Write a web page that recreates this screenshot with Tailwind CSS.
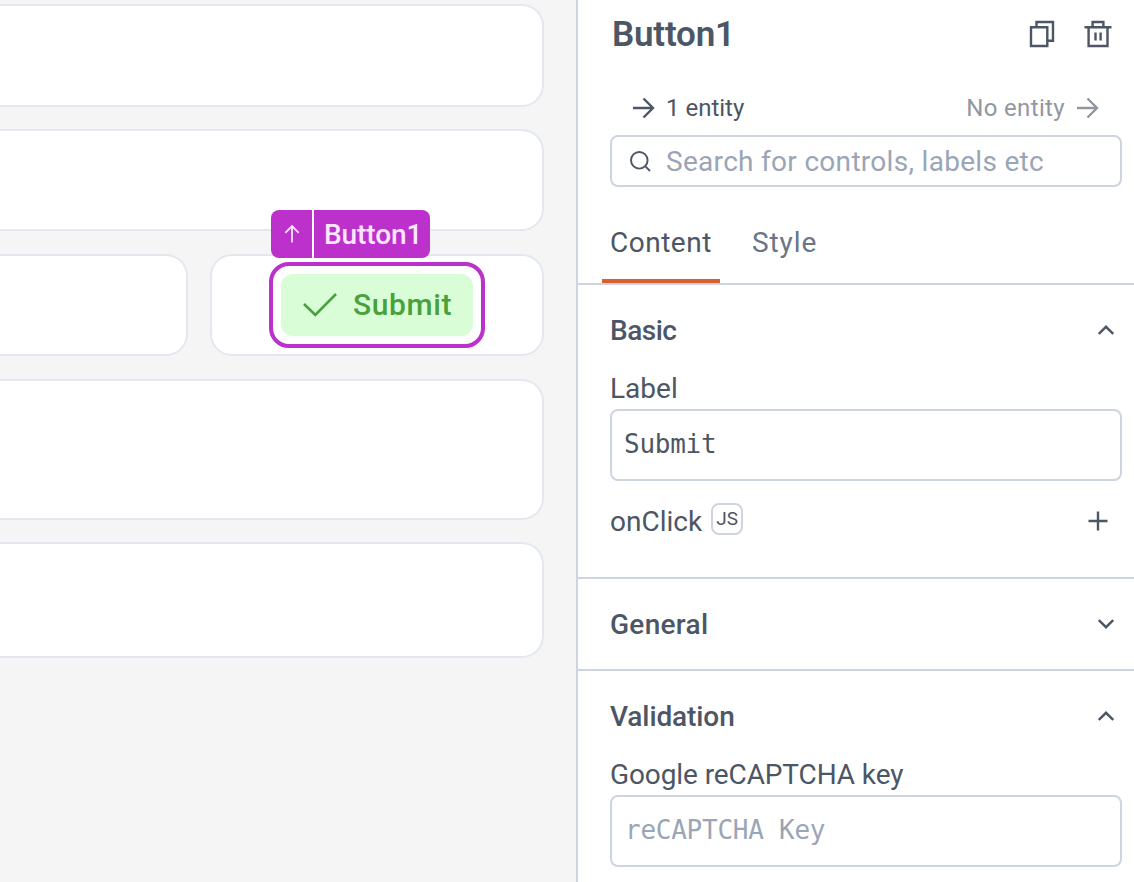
<!DOCTYPE html>
<html lang="en"><head><meta charset="utf-8"><title>Button1</title>
<script src="https://cdn.jsdelivr.net/npm/@tailwindcss/browser@4"></script></head>
<body class="w-[1134px] h-[882px] overflow-hidden bg-white font-['Roboto',sans-serif] text-[#4c5664]">
<div class="flex h-full">
  <main class="w-[576px] h-full shrink-0 bg-[#f5f5f5] pt-1 pr-8 flex flex-col">
    <div class="h-[103px] rounded-r-[22px] border-2 border-l-0 border-[#e3e8ef] bg-white"></div>
    <div class="mt-[22px] h-[102px] rounded-r-[22px] border-2 border-l-0 border-[#e3e8ef] bg-white"></div>
    <div class="mt-[23px] h-[102px] flex gap-[22px]">
      <div class="w-[188px] rounded-r-[22px] border-2 border-l-0 border-[#e3e8ef] bg-white"></div>
      <div class="flex-1 rounded-[22px] border-2 border-[#e3e8ef] bg-white pl-[57px] pt-[6px]">
        <div class="relative w-[216px] h-[86px] rounded-[20px] border-4 border-[#bc30cc] p-2">
          <button class="w-[192px] h-[62px] rounded-xl bg-[#d9fdd6] text-[#48a13c] flex items-center pl-[22px]">
            <svg class="w-[34px] h-[26px] mr-[16px]" viewBox="0 0 34 26" fill="none" stroke="currentColor" stroke-width="2.6"><path d="M1 12 12.3 23 33 2"/></svg>
            <span class="text-[30px] leading-[60px] font-medium tracking-[0.6px]">Submit</span>
          </button>
          <div class="absolute -top-[56px] -left-[2px] flex gap-[2px] h-12 bg-white rounded-lg text-[#fbe6fd]">
            <div class="w-[41px] rounded-l-lg bg-[#bc30cc] flex items-center justify-center"><svg class="w-[16px] h-[20px]" viewBox="0 0 16 20" fill="none" stroke="currentColor" stroke-width="1.8"><path d="M8 18.5V2M1.3 8.8 8 2l6.7 6.8"/></svg></div>
            <div class="w-[116px] rounded-r-lg bg-[#bc30cc] pl-[10px] text-[28px] leading-[50px] h-12 font-medium tracking-[-0.1px]">Button1</div>
          </div>
        </div>
      </div>
    </div>
    <div class="mt-[23px] h-[141px] rounded-r-[22px] border-2 border-l-0 border-[#e3e8ef] bg-white"></div>
    <div class="mt-[22px] h-[116px] rounded-r-[22px] border-2 border-l-0 border-[#e3e8ef] bg-white"></div>
  </main>
  <aside class="w-[558px] h-full border-l-2 border-[#ced4e0] bg-white flex flex-col">
    <header class="h-[68px] pl-[34px] pr-[22px] flex items-center">
      <h1 class="flex-1 text-[35px] leading-[66px] pt-[2px] font-semibold tracking-[-0.2px]">Button1</h1>
      <svg class="w-[26px] h-[28px] mr-[29px]" viewBox="0 0 26 28" fill="none" stroke="currentColor" stroke-width="2.4"><path d="M2 7.2H18.3V26H2ZM7.5 6.5V2H24V20.8H19"/></svg>
      <svg class="w-[28px] h-[28px]" viewBox="0 0 28 28" fill="none" stroke="currentColor" stroke-width="2.4"><path d="M.5 7.3H27.5M4.6 7.5V26H23.5V7.5M8.6 7V2H19.4V7M11.5 12.5V20.5M16.6 12.5V20.5"/></svg>
    </header>
    <div class="h-[67px] pt-[25px] pl-[55px] pr-[35px] flex items-start justify-between text-2xl leading-[30px]">
      <div class="flex items-center gap-[11px]"><svg class="w-[22px] h-[22px]" viewBox="0 0 22 22" fill="none" stroke="currentColor" stroke-width="2.4"><path d="M0 11H20.5M10.5 1.5 20 11 10.5 20.5"/></svg><span class="font-[450]">1 entity</span></div>
      <div class="flex items-center gap-[12px] text-[#92979f]"><span class="font-[450] tracking-[0.35px]">No entity</span><svg class="w-[22px] h-[22px]" viewBox="0 0 22 22" fill="none" stroke="currentColor" stroke-width="2.4"><path d="M0 11H20.5M10.5 1.5 20 11 10.5 20.5"/></svg></div>
    </div>
    <div class="ml-8 w-[512px] h-[52px] border-2 border-[#ced4e0] rounded-lg flex items-center pl-[18px]">
      <svg class="w-[21px] h-[21px] mr-[15px]" viewBox="0 0 21 21" fill="none" stroke="currentColor" stroke-width="1.9"><circle cx="9.3" cy="9.3" r="8.3"/><path d="M15.2 15.2 20 20"/></svg>
      <span class="text-[28px] leading-[46px] pt-[2px] tracking-[0.3px] text-[#9aa5b6]">Search for controls, labels etc</span>
    </div>
    <nav class="h-[98px] shrink-0 border-b-2 border-[#ced4e0] pl-6 pt-[34px] flex text-[28px] leading-[44px]">
      <div class="w-[118px] h-[62px] border-b-4 border-[#d9602f] pl-2 tracking-[0.5px]">Content</div>
      <div class="pl-8 text-[#6b7585] tracking-[0.9px]">Style</div>
    </nav>
    <section class="h-[294px] shrink-0 border-b-2 border-[#ced4e0] pl-8 pr-3">
      <div class="h-[92px] flex items-center justify-between text-[28px] font-medium"><span class="tracking-[-0.5px]">Basic</span>
        <svg class="w-[16px] h-[10px] mr-2 mb-[2px]" viewBox="0 0 16 10" fill="none" stroke="currentColor" stroke-width="2.4"><path d="M.8 9 8 1.8 15.2 9"/></svg></div>
      <div class="h-8 text-[28px] leading-[24px]">Label</div>
      <div class="h-[72px] border-2 border-[#ced4e0] rounded-lg pl-3 font-['DejaVu_Sans_Mono',monospace] text-[26px] leading-[66px] tracking-[-0.25px]">Submit</div>
      <div class="mt-[22px] h-9 flex items-center text-[28px]"><span class="pt-[2px]">onClick</span>
        <span class="ml-[9px] -mt-1 w-8 h-8 border-2 border-[#ced4e0] rounded-lg flex items-center justify-center text-[19px] font-[450]">JS</span>
        <svg class="ml-auto w-5 h-5 mr-[14px]" viewBox="0 0 20 20" fill="none" stroke="currentColor" stroke-width="2.4"><path d="M10 .5V19.5M.5 10H19.5"/></svg></div>
    </section>
    <section class="h-[92px] shrink-0 border-b-2 border-[#ced4e0] pl-8 pr-3">
      <div class="h-[92px] flex items-center justify-between text-[28px] font-medium"><span class="tracking-[0.3px]">General</span>
        <svg class="w-[16px] h-[10px] mr-2 mb-[2px]" viewBox="0 0 16 10" fill="none" stroke="currentColor" stroke-width="2.4"><path d="M.8 1 8 8.2 15.2 1"/></svg></div>
    </section>
    <section class="h-[211px] shrink-0 pl-8 pr-3">
      <div class="h-[92px] flex items-center justify-between text-[28px] font-medium"><span class="tracking-[-0.1px]">Validation</span>
        <svg class="w-[16px] h-[10px] mr-2 mb-[2px]" viewBox="0 0 16 10" fill="none" stroke="currentColor" stroke-width="2.4"><path d="M.8 9 8 1.8 15.2 9"/></svg></div>
      <div class="h-8 text-[28px] leading-[24px] tracking-[-0.1px]">Google reCAPTCHA key</div>
      <div class="h-[72px] border-2 border-[#ced4e0] rounded-lg pl-[13px] font-['DejaVu_Sans_Mono',monospace] text-[26px] leading-[66px] tracking-[-0.25px] text-[#9aa5b6]">reCAPTCHA Key</div>
    </section>
  </aside>
</div>
</body></html>
